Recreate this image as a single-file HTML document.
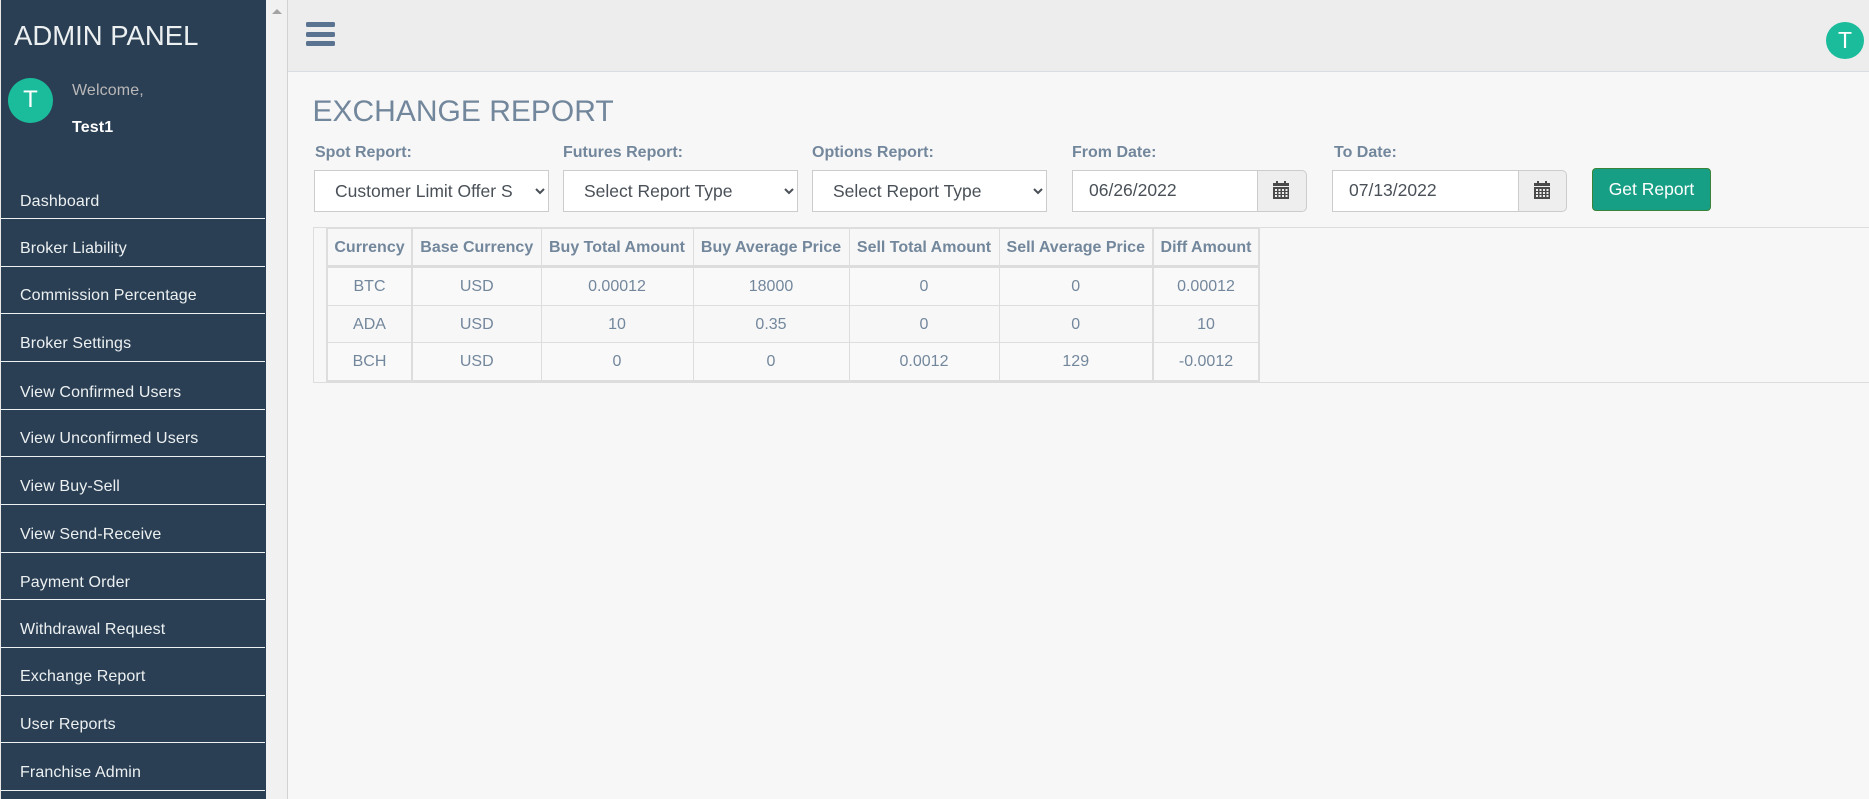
<!DOCTYPE html>
<html lang="en">
<head>
<meta charset="utf-8">
<title>Exchange Report</title>
<style>
html,body{margin:0;padding:0;width:1869px;height:799px;overflow:hidden;background:#f7f7f7;font-family:"Liberation Sans",Arial,sans-serif;font-size:16px;color:#73879c}
div,span,label,a,button,select,input{box-sizing:border-box;position:absolute}
#side{left:1px;top:0;width:265px;height:799px;background:#2a3f54}
#edge{left:0;top:0;width:1px;height:799px;background:#e8e8e8}
#sb{left:266px;top:0;width:21px;height:799px;background:#f1f1f1}
#sbl{left:287px;top:0;width:1px;height:799px;background:#d2d2d2}
#arrow{left:272px;top:9px;width:0;height:0;border-left:5px solid transparent;border-right:5px solid transparent;border-bottom:5px solid #a3a3a3}
#top{left:288px;top:0;width:1581px;height:72px;background:#ededed;border-bottom:1px solid #d9dee4}
.bar{left:306px;width:29px;height:5px;border-radius:1.5px;background:#5a7391}
.av{border-radius:50%;background:#1abc9c;color:#fff;text-align:center}
.brand{left:14px;top:19px;font-size:27.500px;line-height:34px;color:#ecf0f1;white-space:nowrap}
.m{left:20px;color:#ecf0f1;line-height:20px;white-space:nowrap;letter-spacing:.12px;margin-top:1px}
.ln{left:1px;width:264px;height:1px;background:#eef1f3}
h1{position:absolute;margin:0;left:312.500px;top:94px;font-size:30px;font-weight:400;line-height:36px;color:#73879c;white-space:nowrap}
.lb{top:143px;font-weight:700;line-height:20px;white-space:nowrap;color:#73879c}
select{top:170px;width:235px;height:42px;background:#fff;border:1px solid #ccc;font:17.500px "Liberation Sans",Arial,sans-serif;color:#495057;padding:0 20px 0 16px;margin:0;border-radius:0}
.date{top:170px;height:42px;background:#fff;border:1px solid #ccc;border-right:0;font-size:17.500px;color:#495057;line-height:38px;padding-left:16px}
.add{top:170px;width:49px;height:42px;background:#eee;border:1px solid #ccc;border-radius:0 5px 5px 0}
.add svg{position:absolute;left:14px;top:9px}
#btn{left:1592px;top:168px;width:119px;height:43px;background:#169f85;border:1px solid #398439;border-radius:4px;color:#fff;font:17.500px "Liberation Sans",Arial,sans-serif;text-align:center;line-height:40px}
#wrap{left:313px;top:227px;width:1556px;height:156px;border:1px solid #ddd;border-right:0}
table{position:absolute;left:326px;top:227px;width:932px;border-collapse:collapse;table-layout:fixed;border:2px solid #ddd;font-size:16px;color:#73879c}
th,td{border:1px solid #ddd;text-align:center;padding:2px 0 0;white-space:nowrap;overflow:hidden}
th{font-weight:700;height:34px;border-bottom:3px solid #ddd;background:#f7f7f7}
td{height:34.600px;background:#f9f9f9}
tr.o td{background:#f7f7f7}
th.v,td.v{border-right:2px solid #ddd}
</style>
</head>
<body>
<div id="edge"></div>
<div id="side"></div>
<div id="sb"></div><div id="sbl"></div><div id="arrow"></div>
<div id="top"></div>
<div class="bar" style="top:22px"></div>
<div class="bar" style="top:32px"></div>
<div class="bar" style="top:41px"></div>
<div class="av" style="left:1826px;top:22px;width:38px;height:37px;font-size:23px;line-height:37px">T</div>

<div class="brand">ADMIN PANEL</div>
<div class="av" style="left:8px;top:78px;width:45px;height:45px;font-size:24px;line-height:43px">T</div>
<div class="m" style="left:72px;top:80px;color:#bab8b8">Welcome,</div>
<div class="m" style="left:72px;top:117px;color:#fff;font-weight:700">Test1</div>

<div class="m" style="top:191px">Dashboard</div><div class="ln" style="top:218px"></div>
<div class="m" style="top:238px">Broker Liability</div><div class="ln" style="top:266px"></div>
<div class="m" style="top:285px">Commission Percentage</div><div class="ln" style="top:313px"></div>
<div class="m" style="top:333px">Broker Settings</div><div class="ln" style="top:361px"></div>
<div class="m" style="top:382px">View Confirmed Users</div><div class="ln" style="top:409px"></div>
<div class="m" style="top:428px">View Unconfirmed Users</div><div class="ln" style="top:456px"></div>
<div class="m" style="top:476px">View Buy-Sell</div><div class="ln" style="top:504px"></div>
<div class="m" style="top:524px">View Send-Receive</div><div class="ln" style="top:552px"></div>
<div class="m" style="top:572px">Payment Order</div><div class="ln" style="top:599px"></div>
<div class="m" style="top:619px">Withdrawal Request</div><div class="ln" style="top:647px"></div>
<div class="m" style="top:666px">Exchange Report</div><div class="ln" style="top:695px"></div>
<div class="m" style="top:714px">User Reports</div><div class="ln" style="top:742px"></div>
<div class="m" style="top:762px">Franchise Admin</div><div class="ln" style="top:790px"></div>

<h1>EXCHANGE REPORT</h1>

<label class="lb" style="left:315px">Spot Report:</label>
<label class="lb" style="left:563px">Futures Report:</label>
<label class="lb" style="left:812px">Options Report:</label>
<label class="lb" style="left:1072px">From Date:</label>
<label class="lb" style="left:1334px">To Date:</label>

<select style="left:314px"><option>Customer Limit Offer Spot Report</option></select>
<select style="left:563px"><option>Select Report Type</option></select>
<select style="left:812px"><option>Select Report Type</option></select>

<div class="date" style="left:1072px;width:186px">06/26/2022</div>
<div class="add" style="left:1257px;width:50px"><svg width="18" height="20" viewBox="0 0 18 20"><path fill="#4a4a4a" d="M1 3h3V1h2v2h6V1h2v2h3v3H1zM1 7h16v12H1z"/><g fill="#eee"><rect x="3" y="9" width="2" height="2"/><rect x="6.500" y="9" width="2" height="2"/><rect x="10" y="9" width="2" height="2"/><rect x="13.500" y="9" width="2" height="2"/><rect x="3" y="12" width="2" height="2"/><rect x="6.500" y="12" width="2" height="2"/><rect x="10" y="12" width="2" height="2"/><rect x="13.500" y="12" width="2" height="2"/><rect x="3" y="15" width="2" height="2"/><rect x="6.500" y="15" width="2" height="2"/><rect x="10" y="15" width="2" height="2"/><rect x="13.500" y="15" width="2" height="2"/></g></svg></div>
<div class="date" style="left:1332px;width:187px">07/13/2022</div>
<div class="add" style="left:1518px;width:49px"><svg width="18" height="20" viewBox="0 0 18 20"><path fill="#4a4a4a" d="M1 3h3V1h2v2h6V1h2v2h3v3H1zM1 7h16v12H1z"/><g fill="#eee"><rect x="3" y="9" width="2" height="2"/><rect x="6.500" y="9" width="2" height="2"/><rect x="10" y="9" width="2" height="2"/><rect x="13.500" y="9" width="2" height="2"/><rect x="3" y="12" width="2" height="2"/><rect x="6.500" y="12" width="2" height="2"/><rect x="10" y="12" width="2" height="2"/><rect x="13.500" y="12" width="2" height="2"/><rect x="3" y="15" width="2" height="2"/><rect x="6.500" y="15" width="2" height="2"/><rect x="10" y="15" width="2" height="2"/><rect x="13.500" y="15" width="2" height="2"/></g></svg></div>
<div id="btn">Get Report</div>

<div id="wrap"></div>
<table>
<colgroup><col style="width:85px"><col style="width:129px"><col style="width:152px"><col style="width:156px"><col style="width:150px"><col style="width:154px"><col style="width:106px"></colgroup>
<tr><th class="v">Currency</th><th>Base Currency</th><th>Buy Total Amount</th><th>Buy Average Price</th><th>Sell Total Amount</th><th class="v">Sell Average Price</th><th>Diff Amount</th></tr>
<tr><td class="v">BTC</td><td>USD</td><td>0.00012</td><td>18000</td><td>0</td><td class="v">0</td><td>0.00012</td></tr>
<tr class="o"><td class="v">ADA</td><td>USD</td><td>10</td><td>0.35</td><td>0</td><td class="v">0</td><td>10</td></tr>
<tr><td class="v">BCH</td><td>USD</td><td>0</td><td>0</td><td>0.0012</td><td class="v">129</td><td>-0.0012</td></tr>
</table>
</body>
</html>
